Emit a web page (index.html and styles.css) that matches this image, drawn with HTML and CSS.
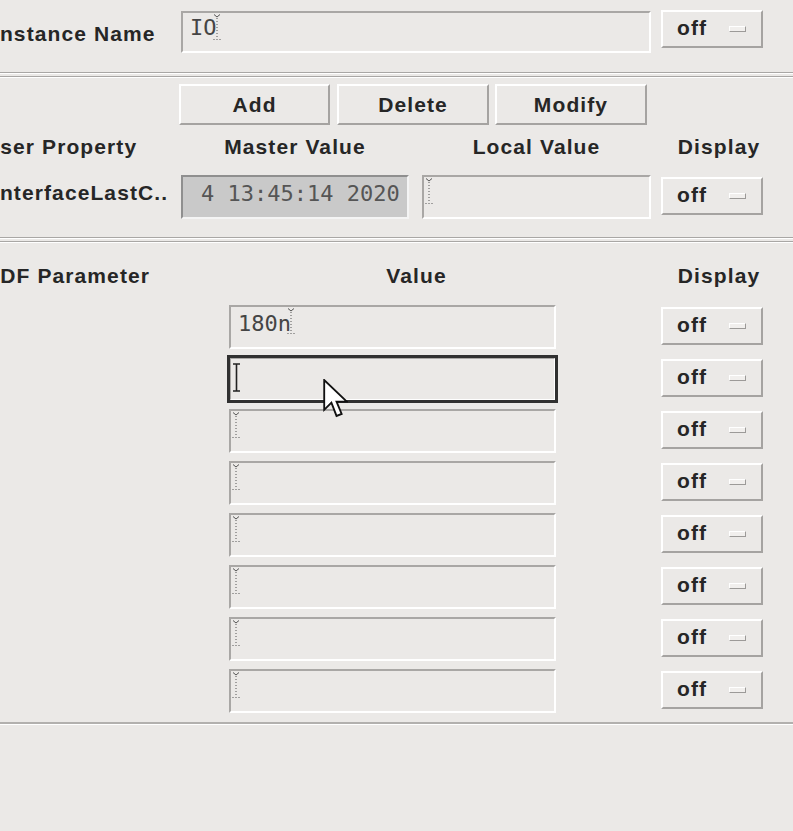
FILE: index.html
```html
<!DOCTYPE html>
<html>
<head>
<meta charset="utf-8">
<title>Edit Object Properties</title>
<link rel="stylesheet" href="styles.css">
</head>
<body>
<div class="dialog">
  <div class="instance-row">
    <span class="label cut-i">Instance Name</span>
    <div class="field field-instance">
      <span class="val">IO</span>
      <svg class="caret" viewBox="0 0 8 27"><path d="M1 0.5 L4 3 L7 0.5" fill="none" stroke="#555" stroke-width="1"/><path d="M4 4 V23" stroke="#555" stroke-width="1" stroke-dasharray="1 2"/><path d="M0.5 25.5 H7.5" stroke="#555" stroke-width="1" stroke-dasharray="1 2"/></svg>
    </div>
    <div class="opt">off<span class="ind"></span></div>
  </div>
  <div class="sep"></div>

  <div class="btnrow">
    <button class="btn btn-add">Add</button>
    <button class="btn btn-del">Delete</button>
    <button class="btn btn-mod">Modify</button>
  </div>
  <div class="prop-head">
    <span class="label cut-u col-label">User Property</span>
    <span class="head head-master">Master Value</span>
    <span class="head head-local">Local Value</span>
    <span class="head head-display">Display</span>
  </div>
  <div class="prop-row">
    <span class="label cut-i col-label row-label">InterfaceLastC..</span>
    <div class="field field-master"><span class="val">4 13:45:14 2020</span></div>
    <div class="field field-local">
      <svg class="caret caret-start" viewBox="0 0 8 27"><path d="M1 0.5 L4 3 L7 0.5" fill="none" stroke="#555" stroke-width="1"/><path d="M4 4 V23" stroke="#555" stroke-width="1" stroke-dasharray="1 2"/><path d="M0.5 25.5 H7.5" stroke="#555" stroke-width="1" stroke-dasharray="1 2"/></svg>
    </div>
    <div class="opt">off<span class="ind"></span></div>
  </div>
  <div class="sep sep-2"></div>

  <div class="cdf-head">
    <span class="label cut-c cdf-label">CDF Parameter</span>
    <span class="head head-value">Value</span>
    <span class="head head-display">Display</span>
  </div>
  <div class="cdf-rows">
    <div class="cdf-row">
      <div class="field field-value">
        <span class="val">180n</span>
        <svg class="caret" viewBox="0 0 8 27"><path d="M1 0.5 L4 3 L7 0.5" fill="none" stroke="#555" stroke-width="1"/><path d="M4 4 V23" stroke="#555" stroke-width="1" stroke-dasharray="1 2"/><path d="M0.5 25.5 H7.5" stroke="#555" stroke-width="1" stroke-dasharray="1 2"/></svg>
      </div>
      <div class="opt">off<span class="ind"></span></div>
    </div>
    <div class="cdf-row">
      <div class="field field-value focused">
        <svg class="ibeam" viewBox="0 0 8 29"><path d="M0 1 H7 M3.5 1 V28 M0 28 H7" fill="none" stroke="#222" stroke-width="1.6"/></svg>
      </div>
      <div class="opt">off<span class="ind"></span></div>
    </div>
    <div class="cdf-row">
      <div class="field field-value">
        <svg class="caret caret-start" viewBox="0 0 8 27"><path d="M1 0.5 L4 3 L7 0.5" fill="none" stroke="#555" stroke-width="1"/><path d="M4 4 V23" stroke="#555" stroke-width="1" stroke-dasharray="1 2"/><path d="M0.5 25.5 H7.5" stroke="#555" stroke-width="1" stroke-dasharray="1 2"/></svg>
      </div>
      <div class="opt">off<span class="ind"></span></div>
    </div>
    <div class="cdf-row">
      <div class="field field-value">
        <svg class="caret caret-start" viewBox="0 0 8 27"><path d="M1 0.5 L4 3 L7 0.5" fill="none" stroke="#555" stroke-width="1"/><path d="M4 4 V23" stroke="#555" stroke-width="1" stroke-dasharray="1 2"/><path d="M0.5 25.5 H7.5" stroke="#555" stroke-width="1" stroke-dasharray="1 2"/></svg>
      </div>
      <div class="opt">off<span class="ind"></span></div>
    </div>
    <div class="cdf-row">
      <div class="field field-value">
        <svg class="caret caret-start" viewBox="0 0 8 27"><path d="M1 0.5 L4 3 L7 0.5" fill="none" stroke="#555" stroke-width="1"/><path d="M4 4 V23" stroke="#555" stroke-width="1" stroke-dasharray="1 2"/><path d="M0.5 25.5 H7.5" stroke="#555" stroke-width="1" stroke-dasharray="1 2"/></svg>
      </div>
      <div class="opt">off<span class="ind"></span></div>
    </div>
    <div class="cdf-row">
      <div class="field field-value">
        <svg class="caret caret-start" viewBox="0 0 8 27"><path d="M1 0.5 L4 3 L7 0.5" fill="none" stroke="#555" stroke-width="1"/><path d="M4 4 V23" stroke="#555" stroke-width="1" stroke-dasharray="1 2"/><path d="M0.5 25.5 H7.5" stroke="#555" stroke-width="1" stroke-dasharray="1 2"/></svg>
      </div>
      <div class="opt">off<span class="ind"></span></div>
    </div>
    <div class="cdf-row">
      <div class="field field-value">
        <svg class="caret caret-start" viewBox="0 0 8 27"><path d="M1 0.5 L4 3 L7 0.5" fill="none" stroke="#555" stroke-width="1"/><path d="M4 4 V23" stroke="#555" stroke-width="1" stroke-dasharray="1 2"/><path d="M0.5 25.5 H7.5" stroke="#555" stroke-width="1" stroke-dasharray="1 2"/></svg>
      </div>
      <div class="opt">off<span class="ind"></span></div>
    </div>
    <div class="cdf-row">
      <div class="field field-value">
        <svg class="caret caret-start" viewBox="0 0 8 27"><path d="M1 0.5 L4 3 L7 0.5" fill="none" stroke="#555" stroke-width="1"/><path d="M4 4 V23" stroke="#555" stroke-width="1" stroke-dasharray="1 2"/><path d="M0.5 25.5 H7.5" stroke="#555" stroke-width="1" stroke-dasharray="1 2"/></svg>
      </div>
      <div class="opt">off<span class="ind"></span></div>
    </div>
  </div>
  <div class="sep-single"></div>

  <svg class="pointer" viewBox="0 0 24 38"><path d="M1 1 L1 30 L8 23 L13 36 L18 34 L13 22 L23 22 Z" fill="#fff" stroke="#111" stroke-width="1.8" stroke-linejoin="miter"/></svg>
</div>
</body>
</html>
```

FILE: styles.css
```css
html, body {
  margin: 0;
  padding: 0;
  background: #ebe9e7;
  overflow: hidden;
}

.dialog {
  position: relative;
  width: 793px;
  height: 831px;
  overflow: hidden;
  background: #ebe9e7;
  color: #262626;
  font-family: "Liberation Sans", Arial, sans-serif;
  font-weight: bold;
  font-size: 21px;
  letter-spacing: 1.1px;
}

.label {
  white-space: nowrap;
  display: block;
}
.cut-i { margin-left: -7px; }
.cut-u { margin-left: -16px; }
.cut-c { margin-left: -16px; }

/* instance row */
.instance-row {
  box-sizing: border-box;
  height: 72px;
  padding-top: 10px;
  display: flex;
  align-items: flex-start;
}
.instance-row .label {
  width: 188px;
  flex: none;
  line-height: 42px;
  margin-top: 3px;
}

/* text fields */
.field {
  box-sizing: border-box;
  height: 44px;
  display: flex;
  align-items: flex-start;
  border: 2px solid;
  border-color: #a9a7a5 #ffffff #ffffff #a9a7a5;
  padding: 4px 0 0 7px;
  font-family: "DejaVu Sans Mono", "Liberation Mono", monospace;
  font-weight: normal;
  font-size: 22px;
  line-height: 26px;
  letter-spacing: 0;
  color: #454545;
  flex: none;
}
.field-instance {
  width: 470px;
  height: 42px;
  margin-top: 1px;
  padding-top: 2px;
}
.caret {
  width: 8px;
  height: 27px;
  margin-top: -3px;
  margin-left: -4px;
  flex: none;
}
.caret.caret-start {
  margin-left: -6px;
}
.field-instance .caret {
  margin-top: -1px;
}

/* option menu buttons */
.opt {
  box-sizing: border-box;
  width: 102px;
  height: 38px;
  flex: none;
  display: flex;
  align-items: center;
  padding-left: 14px;
  border: 2px solid;
  border-color: #ffffff #a5a3a1 #a5a3a1 #ffffff;
  margin-left: 10px;
  padding-bottom: 2px;
}
.ind {
  box-sizing: border-box;
  width: 17px;
  height: 6px;
  margin-left: auto;
  margin-right: 15px;
  margin-top: 2px;
  border: 1px solid;
  border-color: #ffffff #9c9a98 #9c9a98 #ffffff;
  background: #f1efed;
}

/* separators */
.sep {
  box-sizing: border-box;
  height: 6px;
  border-top: 1px solid #a9a7a5;
  border-bottom: 1px solid #ffffff;
  background: linear-gradient(to bottom, #ffffff 0 1px, transparent 1px 3px, #a9a7a5 3px 4px);
}
.sep-2 {
  margin-top: 18px;
}
.sep-single {
  margin-top: 9px;
  height: 0;
  border-top: 2px solid #b2b0ae;
  border-bottom: 1px solid #ffffff;
}

/* buttons */
.btnrow {
  display: flex;
  margin-top: 6px;
  padding-left: 179px;
}
.btn {
  box-sizing: border-box;
  height: 41px;
  background: #ebe9e7;
  border: 2px solid;
  border-color: #ffffff #a5a3a1 #a5a3a1 #ffffff;
  font: inherit;
  letter-spacing: inherit;
  color: inherit;
  padding: 0;
  margin: 0;
}
.btn-add { width: 151px; }
.btn-del { width: 152px; margin-left: 7px; }
.btn-mod { width: 152px; margin-left: 6px; }

/* property header */
.prop-head {
  display: flex;
  margin-top: 4px;
  height: 36px;
  line-height: 36px;
}
.col-label {
  width: 197px;
  flex: none;
}
.head {
  display: block;
  text-align: center;
  white-space: nowrap;
  flex: none;
}
.head-master { width: 228px; }
.head-local { width: 229px; margin-left: 13px; }
.head-display {
  box-sizing: border-box;
  width: 102px;
  margin-left: 10px;
  padding-left: 14px;
}

/* property row */
.prop-row {
  display: flex;
  align-items: flex-start;
  margin-top: 10px;
}
.row-label {
  width: 188px;
  line-height: 36px;
}
.field-master {
  width: 228px;
  background: #c9c9c9;
  border-color: #8f8f8f #f4f4f4 #f4f4f4 #8f8f8f;
  padding-left: 18px;
  color: #555555;
}
.field-local {
  width: 229px;
  margin-left: 13px;
}
.prop-row .opt { margin-top: 2px; }

/* CDF header */
.cdf-head {
  display: flex;
  margin-top: 15px;
  height: 36px;
  line-height: 36px;
}
.cdf-label {
  width: 245px;
  flex: none;
}
.head-value {
  box-sizing: border-box;
  width: 327px;
  padding-left: 48px;
}
.cdf-head .head-display {
  margin-left: 105px;
}

/* CDF rows */
.cdf-rows {
  display: flex;
  flex-direction: column;
  gap: 8px;
  margin-top: 11px;
}
.cdf-row {
  display: flex;
  align-items: flex-start;
  padding-left: 229px;
}
.field-value {
  width: 327px;
}
.cdf-row .opt {
  margin-left: 105px;
  margin-top: 2px;
}
.field.focused {
  outline: 3px solid #303030;
  outline-offset: -1px;
  padding-left: 2px;
}
.ibeam {
  width: 8px;
  height: 29px;
  margin-top: 0;
  flex: none;
}

/* mouse pointer overlay */
.pointer {
  position: absolute;
  left: 323px;
  top: 379px;
  width: 25px;
  height: 39px;
}
```
